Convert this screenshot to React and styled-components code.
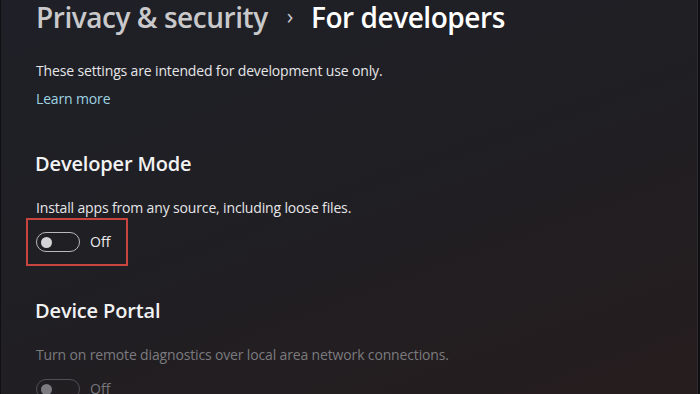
import React from "react";
import styled, { createGlobalStyle } from "styled-components";

const GlobalStyle = createGlobalStyle`
  html, body {
    margin: 0;
    padding: 0;
    background: #111113;
  }
  body {
    font-family: "Open Sans", "Noto Sans", sans-serif;
  }
`;

const Window = styled.div`
  width: 700px;
  height: 394px;
  box-sizing: border-box;
  overflow: hidden;
  border-left: 1px solid #101012;
  border-right: 2px solid #0f0f11;
  box-shadow: inset -1px 0 0 #2c2c30;
  background: linear-gradient(160deg, #1f2027 0%, #1f1f24 45%, #261d1e 100%);
  padding: 0 0 0 35px;
  color: #ffffff;
`;

const Breadcrumb = styled.div`
  display: flex;
  align-items: center;
  height: 34px;
  line-height: 34px;
  font-size: 28px;
  font-weight: 600;
  letter-spacing: -0.45px;
`;

const Crumb = styled.span`
  color: ${(p) => (p.$current ? "#ffffff" : "#c9c9cb")};
`;

const Chevron = styled.span`
  color: #c9c9cb;
  font-size: 22px;
  font-weight: 400;
  margin: 0 18px 0 19px;
  position: relative;
  top: -2px;
`;

const Text = styled.p`
  margin: 0;
  font-size: 14px;
  line-height: 18px;
  letter-spacing: -0.15px;
  color: ${(p) => (p.$muted ? "#7b7b7f" : "#e6e6e8")};
`;

const Intro = styled.div`
  display: flex;
  flex-direction: column;
  gap: 10px;
  margin-top: 28px;
`;

const Link = styled.a`
  font-size: 14px;
  line-height: 18px;
  letter-spacing: -0.15px;
  color: #9ed3e2;
  text-decoration: none;
`;

const Section = styled.section`
  margin-top: ${(p) => p.$top}px;
`;

const Heading = styled.h2`
  margin: 0 0 0 -1px;
  font-size: 20px;
  line-height: 26px;
  font-weight: 600;
  letter-spacing: -0.15px;
  color: #f2f2f3;
`;

const Desc = styled(Text)`
  margin-top: 22px;
`;

const Highlight = styled.div`
  display: inline-flex;
  margin: 1px 0 0 -10px;
  padding: 12px 16px 12px 8px;
  border: 2px solid ${(p) => (p.$on ? "#c8453f" : "transparent")};
`;

const ToggleRow = styled.div`
  display: flex;
  align-items: center;
  gap: 10px;
`;

const Track = styled.div`
  width: 38px;
  height: 18px;
  border: 1px solid ${(p) => (p.$disabled ? "#505054" : "#b9b9bc")};
  border-radius: 10px;
  display: flex;
  align-items: center;
  padding-left: 4px;
  box-sizing: content-box;
`;

const Knob = styled.div`
  width: 11px;
  height: 11px;
  border-radius: 50%;
  background: ${(p) => (p.$disabled ? "#7c7c80" : "#d4d4d7")};
`;

const ToggleLabel = styled.span`
  font-size: 14px;
  line-height: 18px;
  color: ${(p) => (p.$disabled ? "#77777b" : "#ececee")};
`;

const Toggle = ({ disabled }) => (
  <ToggleRow>
    <Track $disabled={disabled}>
      <Knob $disabled={disabled} />
    </Track>
    <ToggleLabel $disabled={disabled}>Off</ToggleLabel>
  </ToggleRow>
);

export default function App() {
  return (
    <>
      <GlobalStyle />
      <Window>
        <Breadcrumb>
          <Crumb>Privacy &amp; security</Crumb>
          <Chevron>›</Chevron>
          <Crumb $current>For developers</Crumb>
        </Breadcrumb>
        <Intro>
          <Text>These settings are intended for development use only.</Text>
          <Link>Learn more</Link>
        </Intro>
        <Section $top={43}>
          <Heading>Developer Mode</Heading>
          <Desc>Install apps from any source, including loose files.</Desc>
          <Highlight $on>
            <Toggle />
          </Highlight>
        </Section>
        <Section $top={32}>
          <Heading>Device Portal</Heading>
          <Desc $muted>
            Turn on remote diagnostics over local area network connections.
          </Desc>
          <Highlight>
            <Toggle disabled />
          </Highlight>
        </Section>
      </Window>
    </>
  );
}
